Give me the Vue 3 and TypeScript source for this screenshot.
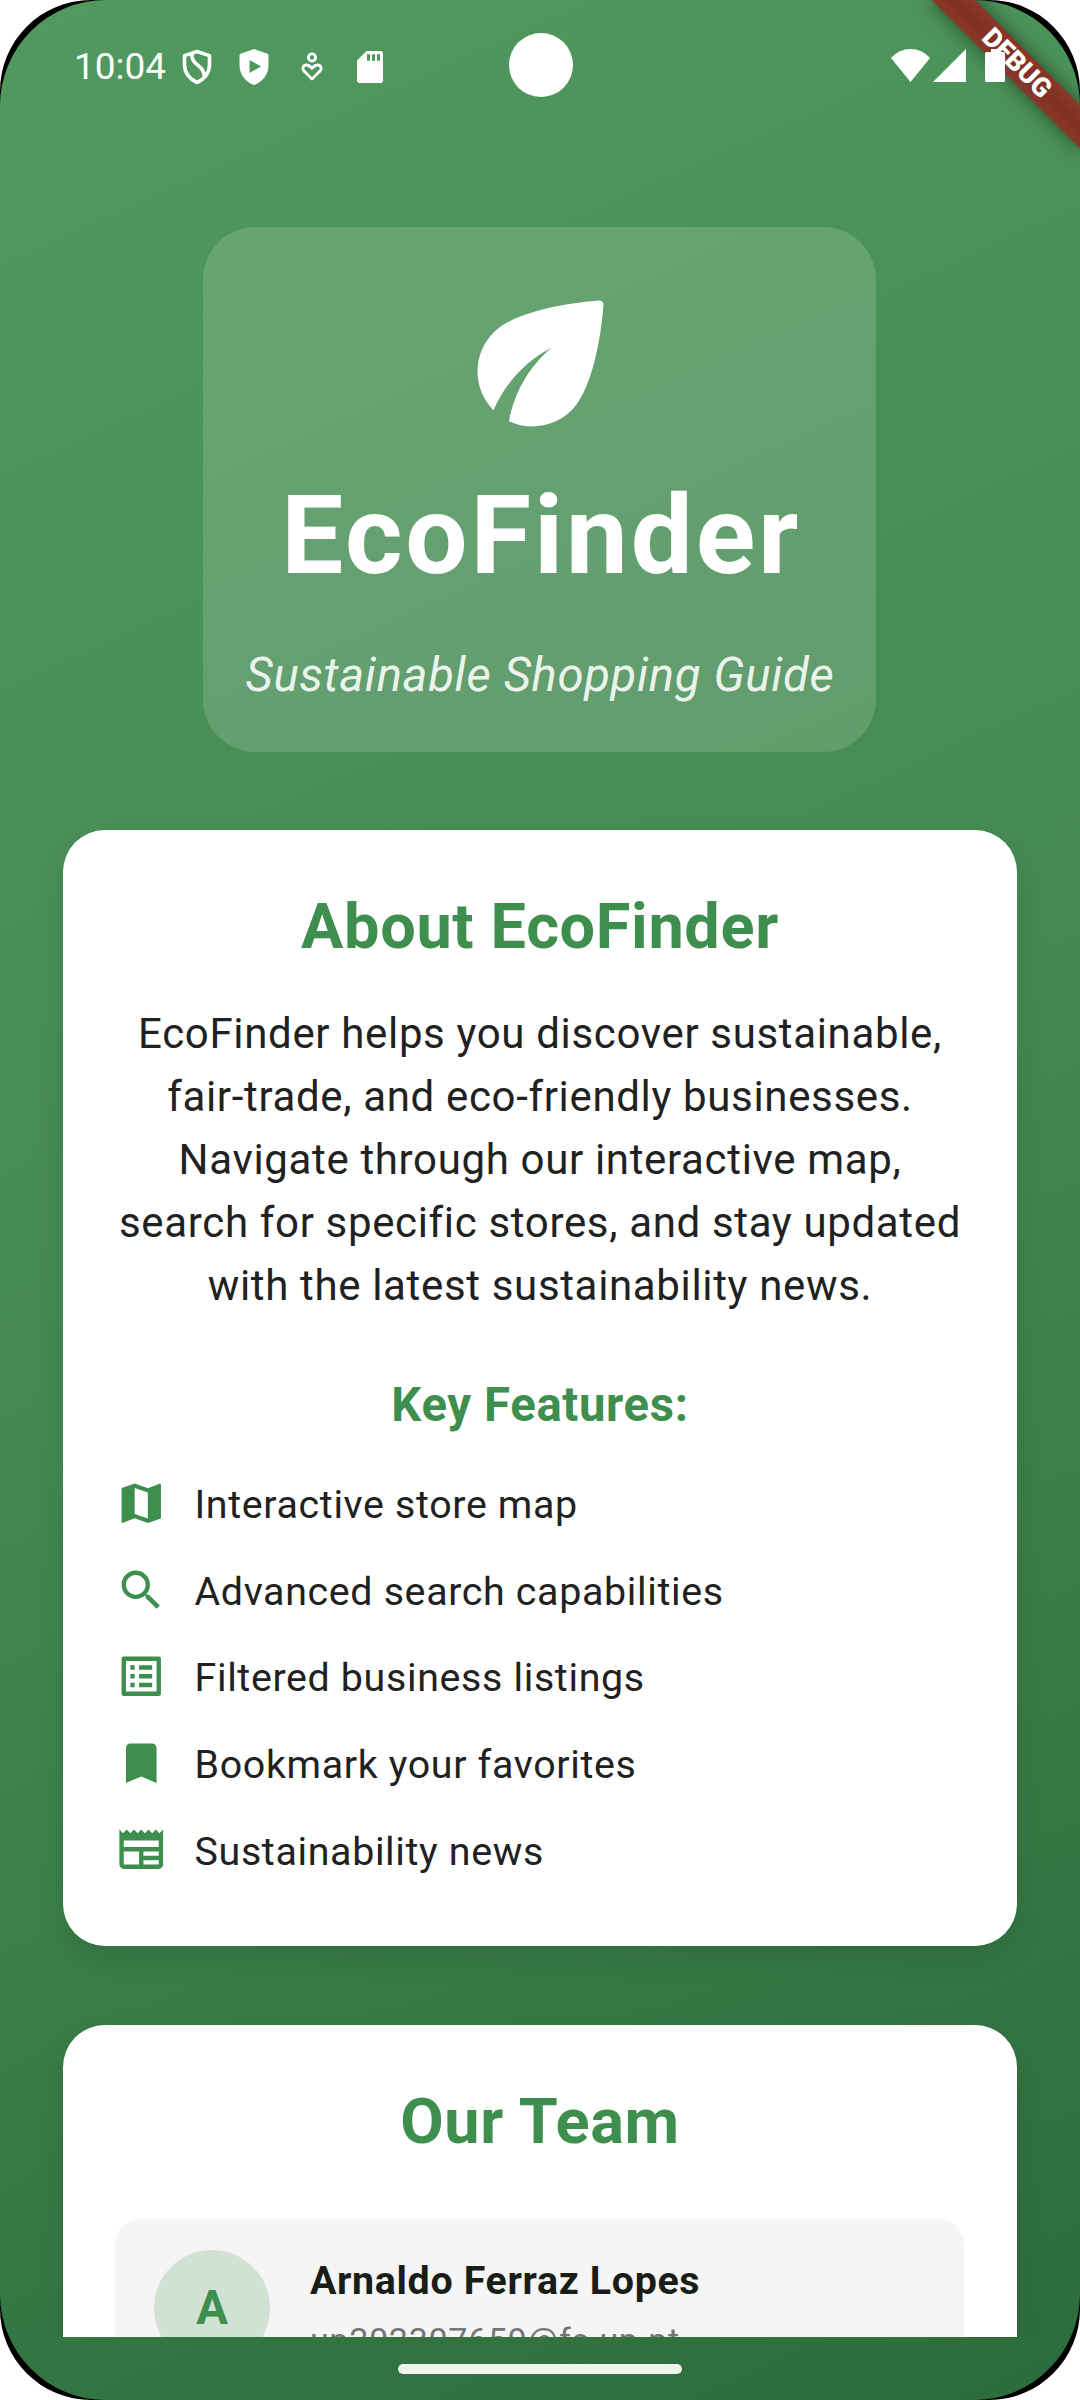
<script setup lang="ts">
interface Feature {
  icon: string
  label: string
}

const features: Feature[] = [
  {
    icon: 'M20.5 3l-.16.03L15 5.1 9 3 3.36 4.9c-.21.07-.36.25-.36.48V20.5c0 .28.22.5.5.5l.16-.03L9 18.9l6 2.1 5.64-1.9c.21-.07.36-.25.36-.48V3.5c0-.28-.22-.5-.5-.5zM15 19l-6-2.11V5l6 2.11V19z',
    label: 'Interactive store map',
  },
  {
    icon: 'M15.5 14h-.79l-.28-.27C15.41 12.59 16 11.11 16 9.5 16 5.91 13.09 3 9.5 3S3 5.91 3 9.5 5.91 16 9.5 16c1.61 0 3.09-.59 4.23-1.57l.27.28v.79l5 4.99L20.49 19l-4.99-5zm-6 0C7.01 14 5 11.99 5 9.5S7.01 5 9.5 5 14 7.01 14 9.5 11.99 14 9.5 14z',
    label: 'Advanced search capabilities',
  },
  {
    icon: 'M19 5v14H5V5h14m1.1-2H3.9c-.5 0-.9.4-.9.9v16.2c0 .4.4.9.9.9h16.2c.4 0 .9-.5.9-.9V3.9c0-.5-.5-.9-.9-.9zM11 7h6v2h-6V7zm0 4h6v2h-6v-2zm0 4h6v2h-6zM7 7h2v2H7zm0 4h2v2H7zm0 4h2v2H7z',
    label: 'Filtered business listings',
  },
  {
    icon: 'M17 3H7c-1.1 0-1.99.9-1.99 2L5 21l7-3 7 3V5c0-1.1-.9-2-2-2z',
    label: 'Bookmark your favorites',
  },
  {
    icon: 'M22 3l-1.67 1.67L18.67 3 17 4.67 15.33 3l-1.66 1.67L12 3l-1.67 1.67L8.67 3 7 4.67 5.33 3 3.67 4.67 2 3v16c0 1.1.9 2 2 2h16c1.1 0 2-.9 2-2V3zM11 19H4v-6h7v6zm9 0h-7v-2h7v2zm0-4h-7v-2h7v2zm0-4H4V8h16v3z',
    label: 'Sustainability news',
  },
]

const members = [
  { initial: 'A', name: 'Arnaldo Ferraz Lopes', email: 'up202307659@fe.up.pt' },
]
</script>

<template>
  <div class="device">
    <div class="screen">
      <main class="viewport">
        <section class="hero">
          <svg class="leaf" viewBox="0 0 24 24">
            <path d="M6.05 8.05c-2.73 2.73-2.73 7.15-.02 9.88 1.47-3.4 4.09-6.24 7.36-7.93-2.77 2.34-4.71 5.61-5.39 9.32 2.6 1.23 5.8.78 7.95-1.37 2.99-2.99 3.88-11.03 4.05-13.38.02-.33-.25-.6-.58-.57-2.34.18-10.38 1.06-13.37 4.05z" />
          </svg>
          <h1>EcoFinder</h1>
          <p class="tagline">Sustainable Shopping Guide</p>
        </section>

        <section class="card">
          <h2>About EcoFinder</h2>
          <p class="about">
            EcoFinder helps you discover sustainable,<br />
            fair-trade, and eco-friendly businesses.<br />
            Navigate through our interactive map,<br />
            search for specific stores, and stay updated<br />
            with the latest sustainability news.
          </p>
          <h3>Key Features:</h3>
          <ul class="features">
            <li v-for="f in features" :key="f.label">
              <svg viewBox="0 0 24 24"><path :d="f.icon" /></svg>
              <span>{{ f.label }}</span>
            </li>
          </ul>
        </section>

        <section class="card team">
          <h2>Our Team</h2>
          <div v-for="m in members" :key="m.email" class="member">
            <div class="avatar">{{ m.initial }}</div>
            <div>
              <div class="name">{{ m.name }}</div>
              <div class="email">{{ m.email }}</div>
            </div>
          </div>
        </section>
      </main>
      <div class="nav"><span class="pill"></span></div>

      <div class="banner"><span>DEBUG</span></div>

      <header class="status">
        <span class="clock">10:04</span>
        <svg class="s1" viewBox="0 0 30 36">
          <path d="M15 2.500 L27.500 6.600 V16 C27.500 24 22 30.500 15 33.500 C8 30.500 2.500 24 2.500 16 V6.600 Z M10 4 C8.500 17 22.500 15.500 22 27" fill="none" stroke="#fff" stroke-width="3.600" stroke-linejoin="round" />
        </svg>
        <svg class="s2" viewBox="0 0 30 36">
          <path fill-rule="evenodd" d="M15 0 L28.500 4.800 Q29.500 5.200 29.500 6.500 V16 C29.500 25.500 23.500 33 15 36 C6.500 33 .500 25.500 .500 16 V6.500 Q.500 5.200 1.500 4.800 Z M10.500 11 V24 L22 17.500 Z" fill="#fff" />
        </svg>
        <svg class="s3" viewBox="0 0 22 30">
          <circle cx="11" cy="5.500" r="3.600" />
          <path d="M11 27 L3.200 19.300 C.500 16.300 2.500 13 5.500 13 C8 13 9.500 14.500 11 16.500 C12.500 14.500 14 13 16.500 13 C19.500 13 21.500 16.300 18.800 19.300 Z" />
        </svg>
        <svg class="s4" viewBox="0 0 26 32">
          <path fill-rule="evenodd" d="M9.500 0 H23.500 Q26 0 26 2.500 V29.500 Q26 32 23.500 32 H2.500 Q0 32 0 29.500 V9.500 Z M10 3.300 V9.700 H13 V3.300 Z M15 3.300 V9.700 H18 V3.300 Z M20 3.300 V9.700 H23 V3.300 Z" fill="#fff" />
        </svg>
        <svg class="s5" viewBox="0 0 39 33">
          <path d="M19.500 33 L0 9 Q8 0 19.500 0 Q31 0 39 9 Z" fill="#fff" />
        </svg>
        <svg class="s6" viewBox="0 0 33 33"><path d="M33 0 V33 H0 Z" fill="#fff" /></svg>
        <svg class="s7" viewBox="0 0 20 33">
          <path d="M6 0 H14 V3 H18.500 Q20 3 20 4.500 V31.500 Q20 33 18.500 33 H1.500 Q0 33 0 31.500 V4.500 Q0 3 1.500 3 H6 Z" fill="#fff" />
        </svg>
      </header>
      <div class="camera"></div>
    </div>
  </div>
</template>

<style>
body {
  background: #fff;
}
</style>

<style scoped>
.device {
  width: 1080px;
  height: 2400px;
  background: #000;
  border-radius: 91px;
  overflow: hidden;
  font-family: Roboto, sans-serif;
}
.screen {
  position: relative;
  width: 1080px;
  height: 2400px;
  border-radius: 106px;
  overflow: hidden;
  background: linear-gradient(155.77deg, #51995e 0%, #438950 50%, #2c6c3c 100%);
}
h1, h2, h3, p, ul {
  margin: 0;
  padding: 0;
}
.viewport {
  height: 2337px;
  padding: 227px 63px 0;
  box-sizing: border-box;
  overflow: hidden;
}
.hero {
  width: 673px;
  height: 525px;
  margin: 0 0 0 140px;
  padding-top: 42px;
  box-sizing: border-box;
  border-radius: 52.5px;
  background: rgba(255, 255, 255, 0.15);
  display: flex;
  flex-direction: column;
  align-items: center;
}
.leaf {
  width: 189px;
  height: 189px;
  margin-left: 1px;
  fill: #fff;
}
h1 {
  margin-top: 13.4px;
  padding-left: 3.5px;
  font-size: 110.25px;
  line-height: 130px;
  font-weight: 700;
  letter-spacing: 2.9px;
  color: #fff;
}
.tagline {
  margin-top: 46px;
  padding-left: 1px;
  font-size: 47.25px;
  line-height: 56px;
  font-style: italic;
  letter-spacing: 0.65625px;
  color: rgba(255, 255, 255, 0.9);
  white-space: nowrap;
}
.card {
  margin-top: 78px;
  padding: 54px 53px 52px 52px;
  border-radius: 42px;
  background: #fff;
  box-shadow: 0 13px 28px rgba(0, 0, 0, 0.1);
}
.card.team {
  margin-top: 79px;
}
h2 {
  font-size: 63px;
  line-height: 86px;
  font-weight: 700;
  color: #3e8e4e;
  text-align: center;
  letter-spacing: 0.65625px;
  padding-left: 1px;
}
.about {
  margin-top: 32px;
  padding-left: 1px;
  font-size: 42px;
  line-height: 63px;
  letter-spacing: 0.65625px;
  color: #212121;
  text-align: center;
  white-space: nowrap;
}
h3 {
  margin-top: 59.5px;
  padding-left: 1px;
  font-size: 47.25px;
  line-height: 56px;
  font-weight: 700;
  letter-spacing: 0.65625px;
  color: #3e8e4e;
  text-align: center;
}
.features {
  margin-top: 28.5px;
  list-style: none;
}
.features li {
  height: 86.6px;
  display: flex;
  align-items: center;
  gap: 27px;
  font-size: 39.375px;
  line-height: 60px;
  letter-spacing: 0.65625px;
  color: #212121;
}
.features span {
  margin-top: 2px;
}
.features svg {
  width: 52.5px;
  height: 52.5px;
  margin-bottom: 2px;
  fill: #3e8e4e;
}
.member {
  margin-top: 54px;
  height: 115.5px;
  padding: 31.5px 39.4px;
  border-radius: 26.25px;
  background: #f5f5f5;
  display: flex;
  gap: 40px;
}
.avatar {
  width: 115.5px;
  height: 115.5px;
  border-radius: 50%;
  background: #d1e1d4;
  color: #3e8e4e;
  font-size: 47.25px;
  line-height: 117.5px;
  font-weight: 700;
  text-align: center;
}
.name {
  margin-top: 6.5px;
  font-size: 39.375px;
  line-height: 47px;
  font-weight: 700;
  letter-spacing: 0.65625px;
  color: #191d17;
}
.email {
  margin-top: 12px;
  font-size: 34.125px;
  line-height: 48px;
  letter-spacing: 0.65625px;
  color: #757575;
}
.nav {
  height: 63px;
  display: flex;
  align-items: center;
  justify-content: center;
}
.pill {
  width: 284px;
  height: 10px;
  border-radius: 5px;
  background: #eff4ef;
}
.banner {
  position: absolute;
  top: 0;
  left: 1080px;
  width: 0;
  height: 0;
  transform: rotate(45deg);
}
.banner span {
  position: absolute;
  left: -105px;
  top: 73.5px;
  width: 210px;
  height: 31.5px;
  background:
    linear-gradient(rgba(183, 28, 28, 0.627), rgba(183, 28, 28, 0.627)),
    linear-gradient(rgba(0, 0, 0, 0.27), rgba(0, 0, 0, 0.47), rgba(0, 0, 0, 0.27));
  box-shadow: 0 0 19px rgba(0, 0, 0, 0.5);
  font-size: 26.8px;
  line-height: 31.5px;
  font-weight: 900;
  text-align: center;
  color: #fff;
}
.status {
  position: absolute;
  inset: 0 0 auto 0;
  height: 132px;
  display: flex;
  align-items: flex-start;
}
.status svg {
  flex: none;
}
.clock {
  width: 107px;
  margin: 45px 0 0 74px;
  font-size: 37px;
  line-height: 44px;
  color: #fff;
}
.s1 { width: 30px; height: 36px; margin: 49px 0 0 1px; }
.s2 { width: 30px; height: 36px; margin: 49px 0 0 27px; }
.s3 { width: 22px; height: 30px; margin: 52px 0 0 32px; fill: none; stroke: #fff; stroke-width: 2.8; stroke-linejoin: round; }
.s4 { width: 26px; height: 32px; margin: 51px 0 0 34px; }
.s5 { width: 39px; height: 33px; margin: 49px 0 0 508px; }
.s6 { width: 33px; height: 33px; margin: 49px 0 0 3px; }
.s7 { width: 20px; height: 33px; margin: 49px 0 0 19px; }
.camera {
  position: absolute;
  left: 508.5px;
  top: 33px;
  width: 64px;
  height: 64px;
  border-radius: 50%;
  background: #fff;
}
</style>
